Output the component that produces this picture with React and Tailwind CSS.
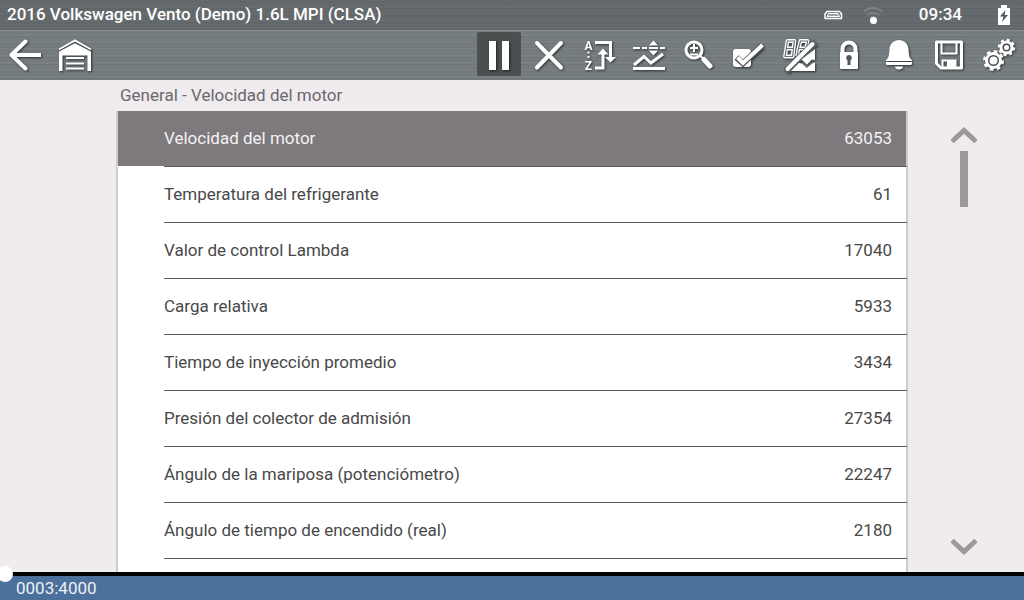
import React, { useState } from 'react';

const PARAMETERS = [
  { name: 'Velocidad del motor', value: '63053' },
  { name: 'Temperatura del refrigerante', value: '61' },
  { name: 'Valor de control Lambda', value: '17040' },
  { name: 'Carga relativa', value: '5933' },
  { name: 'Tiempo de inyección promedio', value: '3434' },
  { name: 'Presión del colector de admisión', value: '27354' },
  { name: 'Ángulo de la mariposa (potenciómetro)', value: '22247' },
  { name: 'Ángulo de tiempo de encendido (real)', value: '2180' },
  { name: '', value: '' },
];

const Icon = ({ children }) => (
  <svg
    className="w-11 h-11 drop-shadow-[1px_1px_1px_rgba(0,0,0,0.6)]"
    viewBox="0 0 44 44"
    fill="none"
    stroke="white"
    strokeWidth="3"
    aria-hidden="true"
  >
    {children}
  </svg>
);

const BackIcon = () => (
  <Icon>
    <path strokeWidth="4" strokeLinecap="round" strokeLinejoin="round" d="M22.500 9.500L8.500 23L22.500 36.500" />
    <path strokeWidth="4" d="M9 23H38" />
  </Icon>
);

const GarageIcon = () => (
  <Icon>
    <path strokeWidth="2" d="M6 17.500L22 8.500L38 17.500" />
    <path fill="white" stroke="none" d="M6 19.500L22 11L38 19.500V39H34.500V23.500H9.500V39H6Z" />
    <path stroke="#50565a" strokeWidth="1" d="M6 19L22 10.500L38 19" />
    <path strokeWidth="2" d="M13 26H31M13 31.500H31M13 36.500H31" />
  </Icon>
);

const PauseIcon = () => (
  <Icon>
    <path fill="white" stroke="none" d="M12 9H19V38H12ZM25 9H32V38H25Z" />
  </Icon>
);

const CloseIcon = () => (
  <Icon>
    <path strokeWidth="4" strokeLinecap="round" d="M10 11L34 35.500M34 11L10 35.500" />
  </Icon>
);

const SortIcon = () => (
  <Icon>
    <g fill="white" stroke="none" fontFamily="Roboto, sans-serif" fontSize="12" fontWeight="700" textAnchor="middle">
      <text x="11.500" y="17.500">A</text>
      <text x="11.500" y="37.500">Z</text>
    </g>
    <path strokeWidth="2" strokeDasharray="2 2.500" d="M11.500 19.500V27" />
    <path d="M18 10.500H33.500V27M18 36H26V21" />
    <path fill="white" stroke="none" d="M20.500 22.500L26 16.500L31.500 22.500ZM28 25H39L33.500 30.500Z" />
  </Icon>
);

const TriggerIcon = () => (
  <Icon>
    <path fill="white" stroke="none" d="M22 13.500L26.500 8.500L31 13.500ZM22 18.500H31L26.500 23.500Z" />
    <path strokeWidth="2" d="M6 16H13M15 16H20M22 16H31M33 16H38" />
    <path d="M7 33L17 24.500L24 31L36 22" />
    <path d="M6 36.500H38" />
  </Icon>
);

const ZoomIcon = () => (
  <Icon>
    <circle cx="17" cy="18" r="8" />
    <path strokeWidth="2" d="M13 16H21M17 12V20M13 22.500H21" />
    <path strokeWidth="2" d="M23 23.500L26 26.500" />
    <path strokeWidth="5" strokeLinecap="round" d="M27 27.500L33 34" />
  </Icon>
);

const CheckIcon = () => (
  <Icon>
    <rect x="6" y="17" width="18" height="18" rx="3" fill="white" stroke="none" />
    <path stroke="#50565a" strokeWidth="6" d="M9.500 25.500L16 31.500L34.500 14" />
    <path strokeWidth="4" d="M10.500 25.500L16 31L35.500 13" />
  </Icon>
);

const DisplayModeIcon = () => (
  <Icon>
    <g strokeWidth="3.800" strokeLinejoin="round">
      <path d="M10.500 9H17.500L15.500 24.500H8L10.500 9ZM9 16.500H16.500" />
      <path d="M23.500 9H30.500L29.500 16.500H21.500L23.500 9ZM21.500 16.500L20 24.500" />
    </g>
    <g stroke="#6b7376" strokeWidth="1.200">
      <path d="M10.500 9H17.500L15.500 24.500H8L10.500 9ZM9 16.500H16.500" />
      <path d="M23.500 9H30.500L29.500 16.500H21.500L23.500 9ZM21.500 16.500L20 24.500" />
    </g>
    <path stroke="#596063" strokeWidth="7" d="M38 10.500L9 39.500" />
    <path strokeWidth="4" strokeLinecap="round" d="M35.500 12L10.500 37" />
    <path fill="white" stroke="none" d="M38 16V27L35 26.500L30 31.500L24.500 26.500Z" transform="translate(0 1)" />
    <path fill="white" stroke="none" d="M22 31L25 31.500L30 36L35 31.500L38 30.500V39H14Z" />
  </Icon>
);

const LockIcon = () => (
  <Icon>
    <path strokeWidth="4" d="M15.500 21V17A6.500 6.500 0 0 1 28.500 17V21" />
    <rect x="13" y="20" width="18" height="17" rx="1" fill="white" stroke="none" />
    <path fill="#50565a" stroke="none" d="M22 23A3 3 0 0 1 23.500 28.500V33H20.500V28.500A3 3 0 0 1 22 23Z" />
  </Icon>
);

const BellIcon = () => (
  <Icon>
    <path
      fill="white"
      stroke="none"
      d="M22 8C27 8.500 31 11 31.500 17C32 23 32 26 35 28V29H9V28C12 26 12 23 12.500 17C13 11 17 8.500 22 8ZM9 30H35V31.500C35 32.500 34 33 33 33H11C10 33 9 32.500 9 31.500ZM18 34.500H26C26 36.500 24 37.500 22 37.500S18 36.500 18 34.500Z"
    />
  </Icon>
);

const SaveIcon = () => (
  <Icon>
    <path strokeWidth="3" strokeLinejoin="round" d="M9.500 10H34.500V36H14L9.500 31.500Z" />
    <path strokeWidth="2" d="M14.500 10V21.500H29.500V10" />
    <path fill="white" fillRule="evenodd" stroke="none" d="M14.500 27.500H29.500V37H14.500ZM16.500 29.500V35H20V29.500Z" />
  </Icon>
);

const SettingsIcon = () => (
  <Icon>
    <circle cx="16.500" cy="28.500" r="7" strokeWidth="3" />
    <circle cx="16.500" cy="28.500" r="9" strokeWidth="3" strokeDasharray="3.600 3.470" />
    <circle cx="16.500" cy="28.500" r="4" fill="white" stroke="none" />
    <circle cx="29.500" cy="15.500" r="5.500" strokeWidth="3" />
    <circle cx="29.500" cy="15.500" r="7.500" strokeWidth="2.500" strokeDasharray="2.950 2.940" />
    <circle cx="29.500" cy="15.500" r="2.500" fill="white" stroke="none" />
  </Icon>
);

const TOOLS = [
  { label: 'Pausa', icon: PauseIcon, active: true },
  { label: 'Borrar', icon: CloseIcon },
  { label: 'Ordenar', icon: SortIcon },
  { label: 'Disparador', icon: TriggerIcon },
  { label: 'Zoom', icon: ZoomIcon },
  { label: 'Seleccionar', icon: CheckIcon },
  { label: 'Vista', icon: DisplayModeIcon },
  { label: 'Bloquear', icon: LockIcon },
  { label: 'Alarma', icon: BellIcon },
  { label: 'Guardar', icon: SaveIcon },
  { label: 'Ajustes', icon: SettingsIcon },
];

const ToolButton = ({ label, icon: Glyph, active }) => (
  <button type="button" aria-label={label} className={`w-11 h-11 rounded-xs ${active ? 'bg-[#4b4f50]' : ''}`}>
    <Glyph />
  </button>
);

const StatusBar = () => (
  <div className="flex items-center justify-between h-[30px] pl-[7px] pr-2.5 bg-black/15 text-[17px] font-medium">
    <h1>2016 Volkswagen Vento (Demo) 1.6L MPI (CLSA)</h1>
    <div className="flex items-center">
      <svg className="w-5 h-5" viewBox="0 0 20 20" fill="none" stroke="white" aria-hidden="true">
        <path strokeWidth="1.500" strokeLinejoin="round" d="M4 6.500H16.500L18.500 9V13.500H2V9Z" />
        <path fill="#9da3a5" d="M5.500 8.500H15L16.500 11.500H4Z" />
      </svg>
      <svg className="w-5 h-5 ml-5" viewBox="0 0 20 20" fill="none" stroke="#7b8184" strokeWidth="2" aria-hidden="true">
        <path d="M1 6.500A13 13 0 0 1 19 6.500M4 10A9 9 0 0 1 16 10M7 13A5 5 0 0 1 13 13" />
        <circle cx="10.500" cy="15.500" r="3.500" fill="white" stroke="none" />
      </svg>
      <time className="ml-9">09:34</time>
      <svg className="w-5 h-5 ml-8" viewBox="0 0 20 20" aria-hidden="true">
        <path fill="white" d="M7 0H13V3H16V20H4V3H7Z" />
        <path fill="#50565a" d="M11.500 5L6 11.500H9.500L8 17L14 10H10.500Z" />
      </svg>
    </div>
  </div>
);

const Toolbar = () => (
  <nav className="flex items-center justify-between h-[50px] px-[3px] pb-1 pt-px border-t border-[#889094]">
    <div className="flex gap-1.5">
      <ToolButton label="Atrás" icon={BackIcon} />
      <ToolButton label="Inicio" icon={GarageIcon} />
    </div>
    <div className="flex gap-1.5">
      {TOOLS.map((tool) => (
        <ToolButton key={tool.label} {...tool} />
      ))}
    </div>
  </nav>
);

const ParameterTable = ({ selected, onSelect }) => (
  <table className="w-full border-separate border-spacing-0 bg-white text-[17px] text-[#484848]">
    <tbody>
      {PARAMETERS.map((row, i) => (
        <tr
          key={i}
          className={`h-14 ${i === selected ? 'bg-[#7d797c] text-[#f4f2f4]' : ''}`}
          onClick={() => row.name && onSelect(i)}
        >
          <td className={`w-12 border-l-2 border-l-[#cccccf] ${i === selected ? 'border-b border-b-white' : ''}`}></td>
          <td className="border-b border-b-[#5c5a5c]">{row.name}</td>
          <td className="border-b border-b-[#5c5a5c] border-r-2 border-r-[#cccccf] pr-3.5 text-right">{row.value}</td>
        </tr>
      ))}
    </tbody>
  </table>
);

const ScrollControls = () => (
  <aside className="flex flex-col items-center w-[116px] pt-[46px] pb-4 pr-1 shrink-0">
    <button type="button" aria-label="Subir">
      <svg className="w-8 h-[18px]" viewBox="0 0 32 18" fill="none" stroke="#9c999c" strokeWidth="5" aria-hidden="true">
        <path d="M4 15.500L16 4.500L28 15.500" />
      </svg>
    </button>
    <div className="w-2 h-14 mt-[7px] bg-[#9c999c]"></div>
    <button type="button" aria-label="Bajar" className="mt-auto">
      <svg className="w-8 h-[18px]" viewBox="0 0 32 18" fill="none" stroke="#9c999c" strokeWidth="5" aria-hidden="true">
        <path d="M4 2.500L16 13.500L28 2.500" />
      </svg>
    </button>
  </aside>
);

const App = () => {
  const [selected, setSelected] = useState(0);
  const [frame, setFrame] = useState(0);

  return (
    <div className="flex flex-col h-screen overflow-hidden bg-[#efebee] font-[Roboto,sans-serif]">
      {/* Brushed metal header */}
      <header className="shrink-0 text-white bg-[#747b7e] bg-[repeating-linear-gradient(180deg,rgba(255,255,255,0.05)_0px,rgba(0,0,0,0.05)_2px,rgba(255,255,255,0.03)_3px,rgba(0,0,0,0.02)_5px,rgba(255,255,255,0.06)_7px)]">
        <StatusBar />
        <Toolbar />
      </header>

      <main className="flex flex-1 min-h-0">
        <div className="w-[116px] shrink-0"></div>
        <section className="flex-1 min-w-0 overflow-hidden">
          <h2 className="h-[31px] pl-1 text-[17px] leading-[31px] text-[#6b686b]">General - Velocidad del motor</h2>
          <ParameterTable selected={selected} onSelect={setSelected} />
        </section>
        <ScrollControls />
      </main>

      {/* Frame timeline */}
      <footer className="shrink-0 bg-[#4b709b] text-[17px] text-[#eef2f7]">
        <input
          type="range"
          aria-label="Cuadro"
          min="0"
          max="4000"
          value={frame}
          onChange={(e) => setFrame(Number(e.target.value))}
          className="relative z-10 block w-[calc(100%+6px)] h-1 -ml-[3px] appearance-none bg-black [&::-webkit-slider-thumb]:appearance-none [&::-webkit-slider-thumb]:w-4 [&::-webkit-slider-thumb]:h-4 [&::-webkit-slider-thumb]:rounded-full [&::-webkit-slider-thumb]:bg-white"
        />
        <p className="pl-4 leading-6">0003:4000</p>
      </footer>
    </div>
  );
};

export default App;
